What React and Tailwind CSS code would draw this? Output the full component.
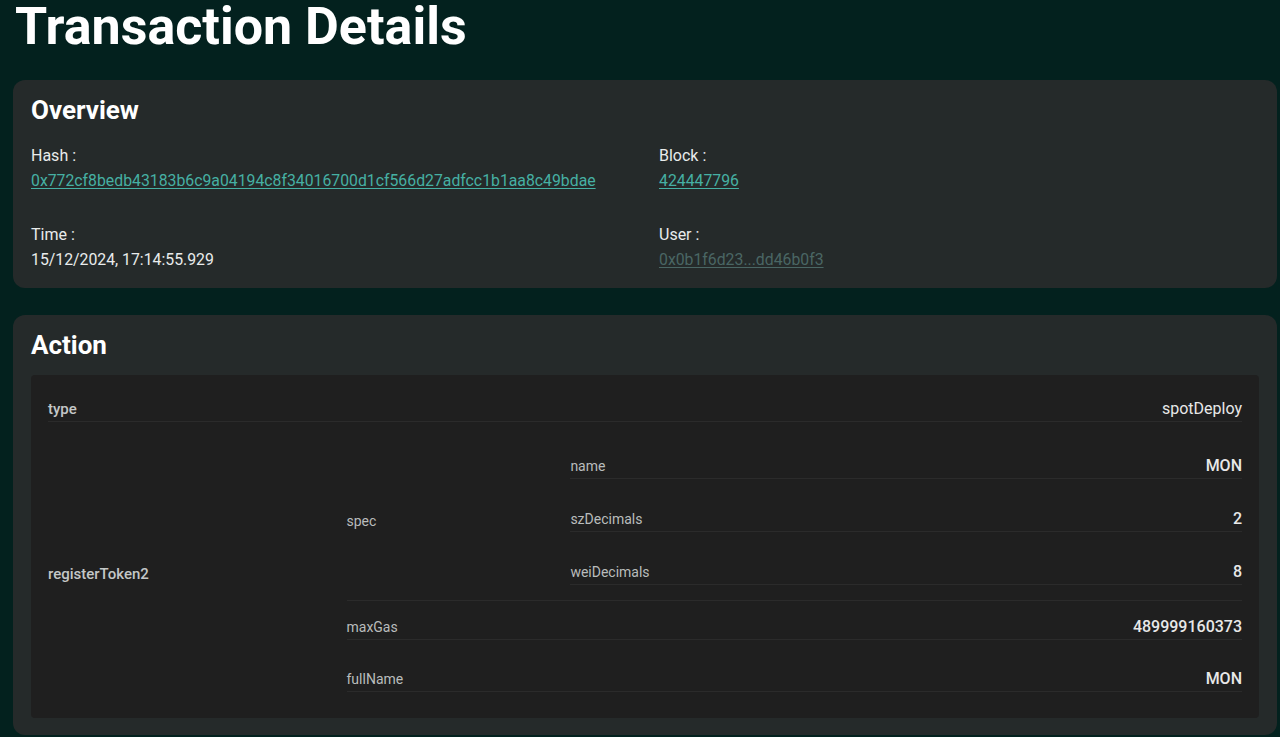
import React from 'react'

const font = { fontFamily: 'Roboto, "Liberation Sans", sans-serif' }

function Field({ label, children }) {
  return (
    <div className="flex flex-col">
      <div className="text-[16px] leading-6 text-[#e9ecec]">{label}</div>
      <div className="text-[15.8px] leading-5 mt-[3px]">{children}</div>
    </div>
  )
}

function Row({ k, v, pt = '', keyCls, valCls = 'font-medium' }) {
  return (
    <div className={`flex items-center border-b border-[#2b2b2b] pb-[2px] ${pt}`}>
      <div className={keyCls}>{k}</div>
      <div className={`flex-1 text-right text-[16px] leading-5 text-[#e8e8e8] ${valCls}`}>{v}</div>
    </div>
  )
}

const topKey = 'w-1/4 text-[15px] font-medium leading-5 text-[#c4c7c7]'
const subKey = 'w-1/4 text-[14px] leading-5 text-[#b9bcbc]'
const leafKey = 'text-[14px] leading-5 text-[#b9bcbc]'

export default function App() {
  return (
    <div className="min-h-screen bg-[#03211e] pl-[13px] pr-[3px] pt-[1px]" style={font}>
      <h1 className="-mt-[4px] pl-[2px] text-[52px] font-bold leading-[60px] text-white">Transaction Details</h1>

      <div className="mt-[23px] rounded-xl bg-[#252a2a] px-[18px] pt-[14px] pb-[18px]">
        <h2 className="text-[26px] font-bold leading-8 text-white">Overview</h2>
        <div className="mt-[18px] grid grid-cols-2 gap-x-7 gap-y-[32px]">
          <Field label="Hash :">
            <a href="#" className="text-[#46b0a3] underline underline-offset-2">0x772cf8bedb43183b6c9a04194c8f34016700d1cf566d27adfcc1b1aa8c49bdae</a>
          </Field>
          <Field label="Block :">
            <a href="#" className="text-[#46b0a3] underline underline-offset-2">424447796</a>
          </Field>
          <Field label="Time :">
            <span className="text-[#e9ecec]">15/12/2024, 17:14:55.929</span>
          </Field>
          <Field label="User :">
            <a href="#" className="text-[#4a6664] underline underline-offset-2">0x0b1f6d23...dd46b0f3</a>
          </Field>
        </div>
      </div>

      <div className="mt-[27px] rounded-xl bg-[#252a2a] px-[18px] pt-[14px] pb-[17px]">
        <h2 className="text-[26px] font-bold leading-8 text-white">Action</h2>
        <div className="mt-[14px] rounded-sm bg-[#1f1f1f] px-[17px] pt-[24px] pb-[26px]">
          <Row k="type" v="spotDeploy" keyCls={topKey} valCls="font-normal" />

          <div className="flex">
            <div className="w-1/4 flex items-center pt-[34px] text-[15px] font-medium leading-5 text-[#c4c7c7]">registerToken2</div>
            <div className="flex-1 flex flex-col">
              <div className="flex items-center border-b border-[#2b2b2b] pt-[34px] pb-[15px]">
                <div className="w-1/4 text-[14px] leading-5 text-[#b9bcbc]">spec</div>
                <div className="flex-1 flex flex-col">
                  <Row k="name" v="MON" keyCls={leafKey} />
                  <Row k="szDecimals" v="2" pt="pt-[30px]" keyCls={leafKey} />
                  <Row k="weiDecimals" v="8" pt="pt-[30px]" keyCls={leafKey} />
                </div>
              </div>
              <Row k="maxGas" v="489999160373" pt="pt-[16px]" keyCls={subKey} />
              <Row k="fullName" v="MON" pt="pt-[29px]" keyCls={subKey} />
            </div>
          </div>
        </div>
      </div>
    </div>
  )
}
